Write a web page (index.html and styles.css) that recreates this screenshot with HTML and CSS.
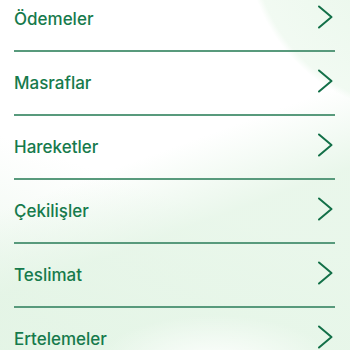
FILE: index.html
```html
<!DOCTYPE html>
<html lang="tr">
<head>
<meta charset="utf-8">
<link rel="stylesheet" href="styles.css">
</head>
<body>
<div class="bg"></div>
<ul class="menu">
  <li class="row"><span class="label">Ödemeler</span><svg class="chev" width="16" height="24" viewBox="0 0 16 24"><path d="M2 1.5 L14.5 12 L2 22.5" fill="none" stroke="#137048" stroke-width="2" stroke-linecap="round" stroke-linejoin="round"/></svg></li>
  <li class="row"><span class="label">Masraflar</span><svg class="chev" width="16" height="24" viewBox="0 0 16 24"><path d="M2 1.5 L14.5 12 L2 22.5" fill="none" stroke="#137048" stroke-width="2" stroke-linecap="round" stroke-linejoin="round"/></svg></li>
  <li class="row"><span class="label">Hareketler</span><svg class="chev" width="16" height="24" viewBox="0 0 16 24"><path d="M2 1.5 L14.5 12 L2 22.5" fill="none" stroke="#137048" stroke-width="2" stroke-linecap="round" stroke-linejoin="round"/></svg></li>
  <li class="row"><span class="label">Çekilişler</span><svg class="chev" width="16" height="24" viewBox="0 0 16 24"><path d="M2 1.5 L14.5 12 L2 22.5" fill="none" stroke="#137048" stroke-width="2" stroke-linecap="round" stroke-linejoin="round"/></svg></li>
  <li class="row"><span class="label">Teslimat</span><svg class="chev" width="16" height="24" viewBox="0 0 16 24"><path d="M2 1.5 L14.5 12 L2 22.5" fill="none" stroke="#137048" stroke-width="2" stroke-linecap="round" stroke-linejoin="round"/></svg></li>
  <li class="row"><span class="label">Ertelemeler</span><svg class="chev" width="16" height="24" viewBox="0 0 16 24"><path d="M2 1.5 L14.5 12 L2 22.5" fill="none" stroke="#137048" stroke-width="2" stroke-linecap="round" stroke-linejoin="round"/></svg></li>
</ul>
</body>
</html>
```
FILE: styles.css
```css
html, body {
  margin: 0;
  padding: 0;
  width: 350px;
  height: 350px;
  overflow: hidden;
}
body {
  position: relative;
  background: #ffffff;
  font-family: Inter, "Noto Sans", sans-serif;
}
.bg {
  position: absolute;
  inset: 0;
  z-index: 0;
  background:
    radial-gradient(ellipse 120px 50px at 215px 365px, rgba(255,255,255,0.95) 0%, rgba(255,255,255,0) 100%),
    radial-gradient(circle 174px at 420px -60px, rgba(228,245,230,0.9) 0%, rgba(238,249,239,0.8) 96%, rgba(238,249,239,0) 100%),
    linear-gradient(160deg, rgba(255,255,255,0) 0%, rgba(255,255,255,0) 44%, rgba(226,244,228,0.75) 62%, rgba(230,246,232,0.9) 100%),
    linear-gradient(20deg, rgba(222,241,224,0.75) 0%, rgba(255,255,255,0) 45%);
}
.menu {
  position: relative;
  z-index: 1;
  list-style: none;
  margin: -12px 0 0 0;
  padding: 0;
}
.row {
  display: flex;
  align-items: center;
  justify-content: space-between;
  height: 62px;
  margin: 0 15px 0 14px;
  border-bottom: 2px solid #589a7c;
}
.label {
  font-size: 17px;
  font-weight: 500;
  color: #167a4c;
}
.chev {
  margin-right: 2px;
  margin-top: -4px;
}
```
